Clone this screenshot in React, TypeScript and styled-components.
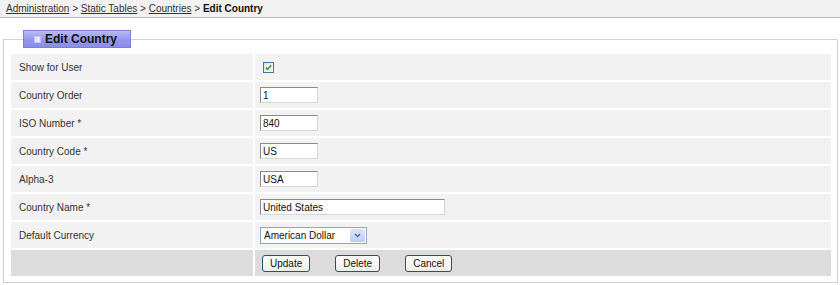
import React from 'react';
import styled, { createGlobalStyle } from 'styled-components';

export const GlobalStyle = createGlobalStyle`
  html, body, #root {
    margin: 0;
    padding: 0;
    background: #ffffff;
  }
  body {
    font-family: "Liberation Sans", Arial, sans-serif;
    font-size: 10px;
    color: #333333;
  }
`;

const Breadcrumb = styled.nav`
  height: 17px;
  line-height: 17px;
  padding-left: 6px;
  background: #f2f2f2;
  border-bottom: 1px solid #b4b4b4;
  color: #333333;
`;

const Crumb = styled.a`
  color: #333333;
  text-decoration: underline;
`;

const Current = styled.b`
  color: #111111;
`;

const Panel = styled.fieldset`
  margin: 12px 2px 0 3px;
  padding: 6px 6px 6px 7px;
  border: 1px solid #d2d2d2;
  min-width: 0;
`;

const Legend = styled.legend`
  margin-left: 12px;
  padding: 0 13px 0 10px;
  height: 16px;
  display: flex;
  align-items: center;
  gap: 4px;
  background: linear-gradient(to bottom, #b9bbf5, #9496ec 55%, #8a8ce8);
  border: 1px solid #7c7fd8;
  font-size: 12px;
  font-weight: bold;
  color: #111111;
`;

const LegendMark = styled.span`
  width: 5px;
  height: 5px;
  background: #e4e4fa;
  border: 1px solid #c4c4f0;
`;

const Form = styled.div`
  display: grid;
  grid-template-columns: 242px 1fr;
  gap: 2px;
`;

const Cell = styled.div<{ $footer?: boolean }>`
  box-sizing: border-box;
  height: 26px;
  display: flex;
  align-items: center;
  background: ${(p) => (p.$footer ? '#dcdcdc' : '#f2f2f2')};
`;

const Label = styled(Cell)`
  padding: 1px 0 0 8px;
`;

const Value = styled(Cell)`
  padding-left: 5px;
`;

const TextInput = styled.input<{ $wide?: boolean }>`
  box-sizing: border-box;
  width: ${(p) => (p.$wide ? '185px' : '58px')};
  height: 16px;
  padding: 0 2px;
  font-family: "Liberation Sans", Arial, sans-serif;
  font-size: 10px;
  color: #111111;
  background: #ffffff;
  border: 1px solid #d6d6d6;
  border-top-color: #8a8a8a;
  border-left-color: #8a8a8a;
  outline: none;
`;

const CheckBox = styled.span`
  box-sizing: border-box;
  margin-left: 3px;
  width: 11px;
  height: 11px;
  border: 1px solid #4e6f95;
  background: linear-gradient(to bottom right, #dfe3ea, #ffffff);
  display: flex;
  align-items: center;
  justify-content: center;
`;

const Select = styled.div`
  box-sizing: border-box;
  width: 107px;
  height: 17px;
  border: 1px solid #8ea6c8;
  background: #ffffff;
  display: flex;
  align-items: center;
  justify-content: space-between;
  padding-left: 3px;
  color: #111111;
`;

const SelectArrow = styled.span`
  width: 15px;
  height: 13px;
  margin-right: 1px;
  background: linear-gradient(to bottom, #dbe6fd, #b9cdf9);
  border-radius: 2px;
  display: flex;
  align-items: center;
  justify-content: center;
`;

const Actions = styled.div`
  display: flex;
  gap: 25px;
  padding-left: 2px;
`;

const Button = styled.button`
  height: 17px;
  padding: 0 7px;
  font-family: "Liberation Sans", Arial, sans-serif;
  font-size: 10px;
  color: #111111;
  background: linear-gradient(to bottom, #ffffff, #eeeeea);
  border: 1px solid #24507c;
  border-radius: 3px;
`;

const Check = () => (
  <svg width="7" height="7" viewBox="0 0 7 7">
    <path d="M0.8 3.6 L2.6 5.4 L6.2 1.2" fill="none" stroke="#2aa02a" strokeWidth="1.6" />
  </svg>
);

const Chevron = () => (
  <svg width="7" height="5" viewBox="0 0 7 5">
    <path d="M1 1 L3.5 3.5 L6 1" fill="none" stroke="#4d6185" strokeWidth="1.3" />
  </svg>
);

const rows: { label: string; value: string; wide?: boolean }[] = [
  { label: 'Country Order', value: '1' },
  { label: 'ISO Number *', value: '840' },
  { label: 'Country Code *', value: 'US' },
  { label: 'Alpha-3', value: 'USA' },
  { label: 'Country Name *', value: 'United States', wide: true },
];

const App: React.FC = () => {
  return (
    <>
      <GlobalStyle />
      <Breadcrumb>
        <Crumb>Administration</Crumb> &gt; <Crumb>Static Tables</Crumb> &gt; <Crumb>Countries</Crumb> &gt;{' '}
        <Current>Edit Country</Current>
      </Breadcrumb>
      <Panel>
        <Legend>
          <LegendMark />
          Edit Country
        </Legend>
        <Form>
          <Label>Show for User</Label>
          <Value>
            <CheckBox>
              <Check />
            </CheckBox>
          </Value>
          {rows.map((r) => (
            <React.Fragment key={r.label}>
              <Label>{r.label}</Label>
              <Value>
                <TextInput $wide={r.wide} defaultValue={r.value} />
              </Value>
            </React.Fragment>
          ))}
          <Label>Default Currency</Label>
          <Value>
            <Select>
              American Dollar
              <SelectArrow>
                <Chevron />
              </SelectArrow>
            </Select>
          </Value>
          <Label $footer />
          <Value $footer>
            <Actions>
              <Button>Update</Button>
              <Button>Delete</Button>
              <Button>Cancel</Button>
            </Actions>
          </Value>
        </Form>
      </Panel>
    </>
  );
};

export default App;
